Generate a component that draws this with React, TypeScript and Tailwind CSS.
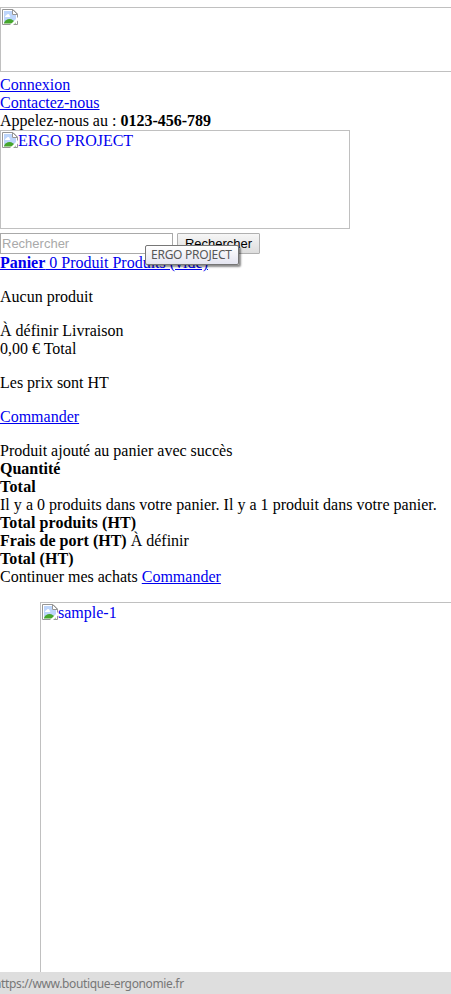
import React from "react";

const SERIF = "font-['Liberation_Serif',serif]";

function BrokenImageIcon() {
  return (
    <svg width="16" height="16" viewBox="0 0 16 16" className="block shrink-0">
      <path d="M1 1H11L15 5V15H1Z" fill="#fff" />
      <path d="M2 2H10V6H14V14H2Z" fill="#bdd5fb" />
      <path d="M3 8C3 6.500 4 6.500 4.500 6C5.500 4.500 7.500 5 7.500 6.500C8.500 6.500 8.500 8 7.500 8Z" fill="#fff" />
      <path d="M2 14C2.500 12 5 10 7.500 10C10 10 12 12 14 14V14.500H2Z" fill="#46a62c" />
      <path d="M0.500 0.500V15.500H15.500V5L11 0.500Z" fill="none" stroke="#969696" />
      <path d="M10.500 0.500V5.500H15.500Z" fill="#fff" stroke="#969696" />
      <path d="M8 16L16 8V11.500L11 16Z" fill="#fff" />
    </svg>
  );
}

function Link({ children }: { children: React.ReactNode }) {
  return <a href="#" className="text-[#0000ee] underline">{children}</a>;
}

export default function App() {
  return (
    <div className={`relative flex h-[994px] w-[451px] flex-col overflow-hidden bg-white text-[16px] leading-[18px] whitespace-nowrap text-black ${SERIF}`}>
      <div className="mt-[7px] h-[65px] w-[470px] shrink-0 border border-[#c0c0c0] p-px">
        <BrokenImageIcon />
      </div>
      <div className="mt-1"><Link>Connexion</Link></div>
      <div><Link>Contactez-nous</Link></div>
      <div>Appelez-nous au : <b>0123-456-789</b></div>
      <div className="flex h-[99px] w-[350px] shrink-0 items-start border border-[#c0c0c0] p-px text-[#0000ee]">
        <BrokenImageIcon />
        <span>ERGO PROJECT</span>
      </div>
      <div className="mt-1 flex h-[21px] shrink-0 gap-1 font-['Liberation_Sans',sans-serif] text-[13px]">
        <input
          placeholder="Rechercher"
          className="h-[21px] w-[173px] border border-[#a9a9a9] bg-white px-px placeholder:text-[#a9a9a9]"
        />
        <button className="h-[21px] w-[83px] rounded-[1px] border border-[#b0b0b0] bg-linear-to-b from-[#f6f6f6] to-[#dddddd] leading-[19px]">
          Rechercher
        </button>
      </div>
      <div><Link><b>Panier</b> 0 Produit Produits (vide)</Link></div>
      <div className="mt-4">Aucun produit</div>
      <div className="mt-4">À définir Livraison</div>
      <div>0,00 € Total</div>
      <div className="mt-4">Les prix sont HT</div>
      <div className="mt-4"><Link>Commander</Link></div>
      <div className="mt-4">Produit ajouté au panier avec succès</div>
      <div className="font-bold">Quantité</div>
      <div className="font-bold tracking-[0.2px]">Total</div>
      <div className="tracking-[0.025px]">Il y a 0 produits dans votre panier. Il y a 1 produit dans votre panier.</div>
      <div className="font-bold tracking-[0.1px]">Total produits (HT)</div>
      <div><b>Frais de port (HT)</b> À définir</div>
      <div className="font-bold tracking-[0.1px]">Total (HT)</div>
      <div>Continuer mes achats <Link>Commander</Link></div>
      <div className="mt-4 ml-10 flex h-[400px] w-[779px] shrink-0 items-start border border-[#c0c0c0] p-px text-[#0000ee]">
        <BrokenImageIcon />
        <span>sample-1</span>
      </div>
      <div className="absolute top-[245px] left-[145px] flex h-[20px] w-[94px] items-center rounded-[2px] border border-[#767676] bg-linear-to-b from-white to-[#e4e5f0] pl-[5px] font-['Noto_Sans',sans-serif] text-[12px] tracking-[-0.25px] text-[#575757] shadow-[2px_2px_2px_rgba(0,0,0,0.45)]">
        ERGO PROJECT
      </div>
      <div className="absolute bottom-0 left-0 flex h-[22px] w-full items-center bg-[#dedede] pt-0.5 font-['Noto_Sans',sans-serif] text-[12px] tracking-[-0.36px] text-[#777777]">
        <span className="-ml-[6px]">https://www.boutique-ergonomie.fr</span>
      </div>
    </div>
  );
}
